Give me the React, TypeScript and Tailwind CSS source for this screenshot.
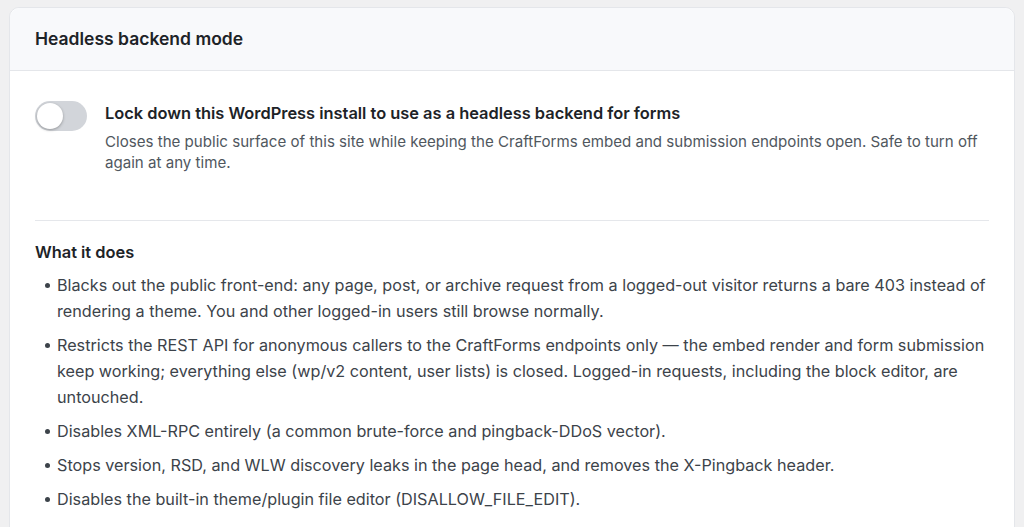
import { useState } from "react";

const items = [
  "Blacks out the public front-end: any page, post, or archive request from a logged-out visitor returns a bare 403 instead of rendering a theme. You and other logged-in users still browse normally.",
  "Restricts the REST API for anonymous callers to the CraftForms endpoints only — the embed render and form submission keep working; everything else (wp/v2 content, user lists) is closed. Logged-in requests, including the block editor, are untouched.",
  "Disables XML-RPC entirely (a common brute-force and pingback-DDoS vector).",
  "Stops version, RSD, and WLW discovery leaks in the page head, and removes the X-Pingback header.",
  "Disables the built-in theme/plugin file editor (DISALLOW_FILE_EDIT).",
];

export default function App() {
  const [on, setOn] = useState(false);

  return (
    <div
      className="min-h-screen bg-[#f0f0f1] pt-[7px] px-[9px] overflow-hidden"
      style={{ fontFamily: "Inter, 'Noto Sans', sans-serif" }}
    >
      <div className="bg-white rounded-t-[10px] border border-[#e4e6ea] min-h-[530px]">
        {/* header */}
        <div className="h-[63px] bg-[#f8f9fb] rounded-t-[10px] border-b border-[#e4e6ea] flex items-center px-[25px]">
          <h2 className="text-[17.5px] font-semibold text-[#1d2327]">Headless backend mode</h2>
        </div>

        <div className="px-[25px] pt-[30px]">
          {/* toggle row */}
          <div className="flex gap-[18px] pb-[47px] border-b border-[#e5e7eb]">
            <button
              onClick={() => setOn(!on)}
              className={`shrink-0 w-[52px] h-[30px] rounded-full p-[2px] flex ${on ? "bg-[#2271b1] justify-end" : "bg-[#d2d5da] justify-start"}`}
            >
              <span className="w-[26px] h-[26px] rounded-full bg-white shadow-[0_1px_3px_rgba(0,0,0,0.3)]" />
            </button>
            <div className="pt-[1px]">
              <div className="text-[16.4px] font-semibold text-[#1d2327] leading-[22px]">
                Lock down this WordPress install to use as a headless backend for forms
              </div>
              <p className="mt-[7px] text-[15.1px] leading-[21px] text-[#50575e]">
                Closes the public surface of this site while keeping the CraftForms embed and submission endpoints open. Safe to turn off again at any time.
              </p>
            </div>
          </div>

          {/* what it does */}
          <h3 className="mt-[20px] text-[16.4px] font-semibold text-[#1d2327] leading-[22px]">What it does</h3>
          <ul className="mt-[9px] flex flex-col gap-[8px]">
            {items.map((t) => (
              <li key={t} className="flex text-[16.2px] leading-[26px] text-[#3c434a]">
                <span className="w-[22px] shrink-0 flex justify-center pt-[11px] pl-[2px]">
                  <span className="w-[5px] h-[5px] rounded-full bg-[#3c434a]" />
                </span>
                <span>{t}</span>
              </li>
            ))}
          </ul>
        </div>
      </div>
    </div>
  );
}
